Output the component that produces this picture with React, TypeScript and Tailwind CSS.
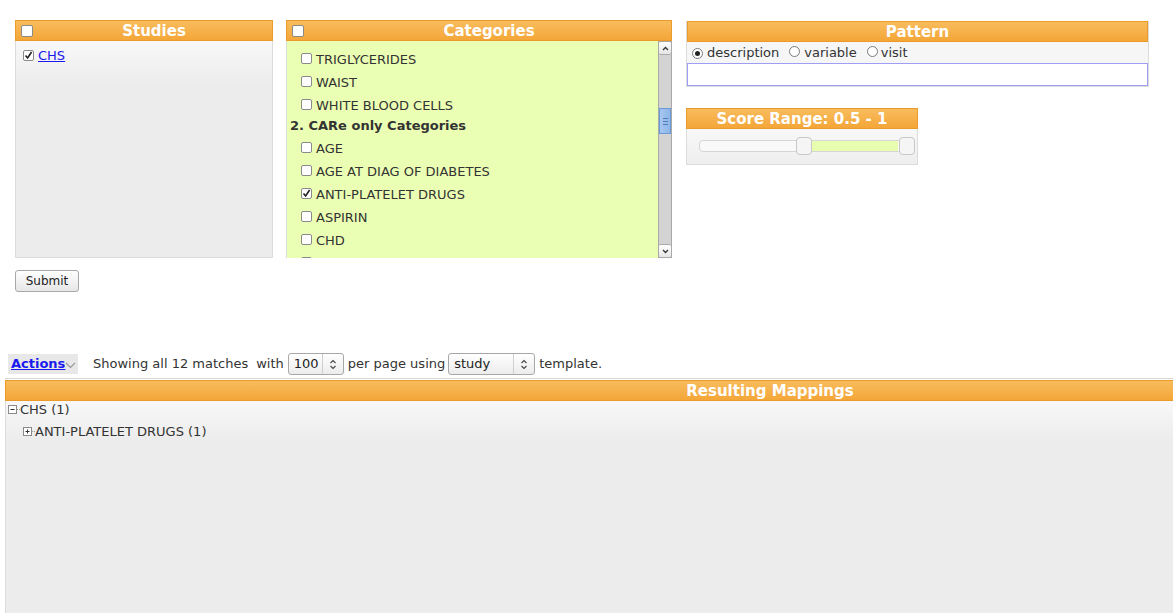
const Box = ({ checked = false }: { checked?: boolean }) => (
  <span className="inline-flex h-[11px] w-[11px] shrink-0 items-center justify-center rounded-[2px] border border-[#8a8a8a] bg-white">
    {checked && (
      <svg width="9" height="9" viewBox="0 0 9 9">
        <path d="M1.5 4.5 L3.6 7 L7.6 1" fill="none" stroke="#222" strokeWidth="1.6" />
      </svg>
    )}
  </span>
);

const Radio = ({ on = false }: { on?: boolean }) => (
  <span className="inline-flex h-[11px] w-[11px] shrink-0 items-center justify-center rounded-full border border-[#7a7a7a] bg-white">
    {on && <span className="h-[5px] w-[5px] rounded-full bg-[#222]" />}
  </span>
);

const Header = ({ title, box = false }: { title: string; box?: boolean }) => (
  <div className="flex h-[21px] items-center border border-[#ea9b2a] bg-linear-to-b from-[#f8bc5c] to-[#f4a637] text-[15px] font-bold leading-none text-white">
    {box && (
      <span className="flex w-[20px] shrink-0 pl-[5px]">
        <span className="h-[12px] w-[12px] rounded-[2px] border border-[#8a8a8a] bg-white" />
      </span>
    )}
    <span className="flex-1 pt-px text-center">{title}</span>
  </div>
);

const Arrows = () => (
  <svg width="8" height="11" viewBox="0 0 8 11">
    <path d="M1.5 4 L4 1.5 L6.5 4 M1.5 7 L4 9.5 L6.5 7" fill="none" stroke="#444" strokeWidth="1.1" />
  </svg>
);

const Select = ({ value, width }: { value: string; width: string }) => (
  <span className={`inline-flex h-[22px] items-center rounded-[3px] border border-[#a8a8a8] bg-linear-to-b from-white to-[#ececec] ${width}`}>
    <span className="flex-1 pl-[5px] text-[13px] text-[#222]">{value}</span>
    <span className="flex h-full w-[21px] items-center justify-center border-l border-[#cfcfcf]">
      <Arrows />
    </span>
  </span>
);

const TreeIcon = ({ plus = false }: { plus?: boolean }) => (
  <svg width="13" height="10" viewBox="0 0 13 10" className="shrink-0">
    <rect x="0.5" y="0.5" width="8" height="8" fill="#fff" stroke="#8a8a8a" />
    <path d="M2.5 4.5 H6.5" stroke="#333" />
    {plus && <path d="M4.5 2.5 V6.5" stroke="#333" />}
    <path d="M9 4.5 H13" stroke="#999" strokeDasharray="1 1" />
  </svg>
);

const categories: (string | { group: string })[] = [
  "OTHER",
  "TRIGLYCERIDES",
  "WAIST",
  "WHITE BLOOD CELLS",
  { group: "2. CARe only Categories" },
  "AGE",
  "AGE AT DIAG OF DIABETES",
  "ANTI-PLATELET DRUGS",
  "ASPIRIN",
  "CHD",
  "CHOLESTEROL",
];

export default function App() {
  return (
    <div className="h-[613px] w-[1173px] overflow-hidden bg-white font-['DejaVu_Sans','Liberation_Sans',sans-serif] text-[13px] text-[#333]">
      <div className="flex items-start pt-[20px]">
        {/* Studies */}
        <div className="ml-[15px] w-[258px]">
          <Header title="Studies" box />
          <div className="h-[217px] border border-t-0 border-[#dcdcdc] bg-[linear-gradient(#f8f8f8,#ececec_45px)] pl-[7px] pt-[5px]">
            <div className="flex items-center gap-[4px]">
              <Box checked />
              <a className="text-[#1a1aee] underline">CHS</a>
            </div>
          </div>
        </div>

        {/* Categories */}
        <div className="ml-[13px] w-[386px]">
          <Header title="Categories" box />
          <div className="flex h-[217px] border-l border-[#dcdcdc] bg-[#ebffb4]">
            <div className="flex-1 overflow-hidden">
              <div className="-mt-[16px]">
                {categories.map((c, i) =>
                  typeof c === "string" ? (
                    <div key={i} className="flex h-[23px] items-center gap-[4px] pl-[14px]">
                      <span className="-mt-[2px] flex">
                        <Box checked={c === "ANTI-PLATELET DRUGS"} />
                      </span>
                      <span>{c}</span>
                    </div>
                  ) : (
                    <div key={i} className="flex h-[20px] items-center pb-[3px] pl-[3px] font-bold">
                      {c.group}
                    </div>
                  )
                )}
              </div>
            </div>
            <div className="flex w-[14px] flex-col border border-[#a9a9a9] bg-[#d3d3d3]">
              <div className="flex h-[13px] items-center justify-center rounded-[2px] border-b border-[#aaa] bg-linear-to-b from-white to-[#e6e6e6]">
                <svg width="7" height="5" viewBox="0 0 7 5">
                  <path d="M1 4 L3.5 1.5 L6 4" fill="none" stroke="#333" strokeWidth="1.3" />
                </svg>
              </div>
              <div className="h-[53px]" />
              <div className="flex h-[26px] flex-col items-center justify-center gap-[2px] border border-[#6b9bd6] bg-linear-to-r from-[#a5c6ef] to-[#8fb6e8]">
                <span className="h-px w-[5px] bg-[#4d7cb8]" />
                <span className="h-px w-[5px] bg-[#4d7cb8]" />
                <span className="h-px w-[5px] bg-[#4d7cb8]" />
              </div>
              <div className="flex-1" />
              <div className="flex h-[13px] items-center justify-center rounded-[2px] border-t border-[#aaa] bg-linear-to-b from-white to-[#e6e6e6]">
                <svg width="7" height="5" viewBox="0 0 7 5">
                  <path d="M1 1 L3.5 3.5 L6 1" fill="none" stroke="#333" strokeWidth="1.3" />
                </svg>
              </div>
            </div>
          </div>
        </div>

        {/* Right column */}
        <div className="ml-[14px] mt-[1px] flex flex-col">
          <div className="w-[463px] border-x border-b border-[#dcdcdc]">
            <Header title="Pattern" />
            <div className="flex h-[21px] items-center bg-[#f6f6f6] pl-[5px] pt-px">
              <Radio on />
              <span className="ml-[4px]">description</span>
              <span className="ml-[10px]"><Radio /></span>
              <span className="ml-[4px]">variable</span>
              <span className="ml-[10px]"><Radio /></span>
              <span className="ml-[3px]">visit</span>
            </div>
            <div className="h-[23px] border border-[#9e9ef4] bg-white" />
          </div>

          <div className="mt-[21px] w-[232px]">
            <Header title="Score Range: 0.5 - 1" />
            <div className="h-[36px] border border-t-0 border-[#dcdcdc] bg-linear-to-b from-[#f8f8f8] to-[#eeeeee] px-[12px] pt-[11px]">
              <div className="relative h-[12px] rounded-[4px] border border-[#d6d6d6] bg-[#f9f9f9]">
                <div className="absolute inset-y-0 left-[111px] right-[6px] bg-[#e9fdb0]" />
                <span className="absolute -top-[4px] left-[96px] h-[18px] w-[16px] rounded-[4px] border border-[#c8c8c8] bg-[#f5f5f5]" />
                <span className="absolute -top-[4px] left-[199px] h-[18px] w-[16px] rounded-[4px] border border-[#c8c8c8] bg-[#f5f5f5]" />
              </div>
            </div>
          </div>
        </div>
      </div>

      <button className="ml-[15px] mt-[12px] h-[22px] w-[64px] rounded-[3px] border border-[#a8a8a8] bg-linear-to-b from-white to-[#e6e6e6] text-[12px] text-[#222]">
        Submit
      </button>

      {/* Actions bar */}
      <div className="mt-[61px] flex h-[22px] items-center">
        <span className="ml-[8px] flex h-[20px] w-[70px] items-center bg-[#e8e8e8] pl-[3px]">
          <a className="font-bold text-[#1a1aee] underline">Actions</a>
          <svg width="11" height="7" viewBox="0 0 11 7" className="mt-[3px]">
            <path d="M1 1 L5.5 5.5 L10 1" fill="none" stroke="#9a9a9a" strokeWidth="1.2" />
          </svg>
        </span>
        <span className="ml-[15px]">Showing all 12 matches</span>
        <span className="ml-[8px]">with</span>
        <span className="ml-[4px]"><Select value="100" width="w-[56px]" /></span>
        <span className="ml-[4px]">per page using</span>
        <span className="ml-[3px]"><Select value="study" width="w-[87px]" /></span>
        <span className="ml-[4px]">template.</span>
      </div>

      {/* Resulting Mappings */}
      <div className="ml-[5px] mt-[3px] w-[1530px] border-t border-[#d6d6d6] pt-px">
        <Header title="Resulting Mappings" />
        <div className="h-[220px] border-l border-[#dcdcdc] bg-[linear-gradient(#f8f8f8,#ececec_40px)] pl-[2px]">
          <div className="flex h-[18px] items-center">
            <TreeIcon />
            <span className="-ml-[1px]">CHS (1)</span>
          </div>
          <div className="flex h-[25px] items-center pl-[15px]">
            <TreeIcon plus />
            <span className="-ml-[1px]">ANTI-PLATELET DRUGS (1)</span>
          </div>
        </div>
      </div>
    </div>
  );
}
